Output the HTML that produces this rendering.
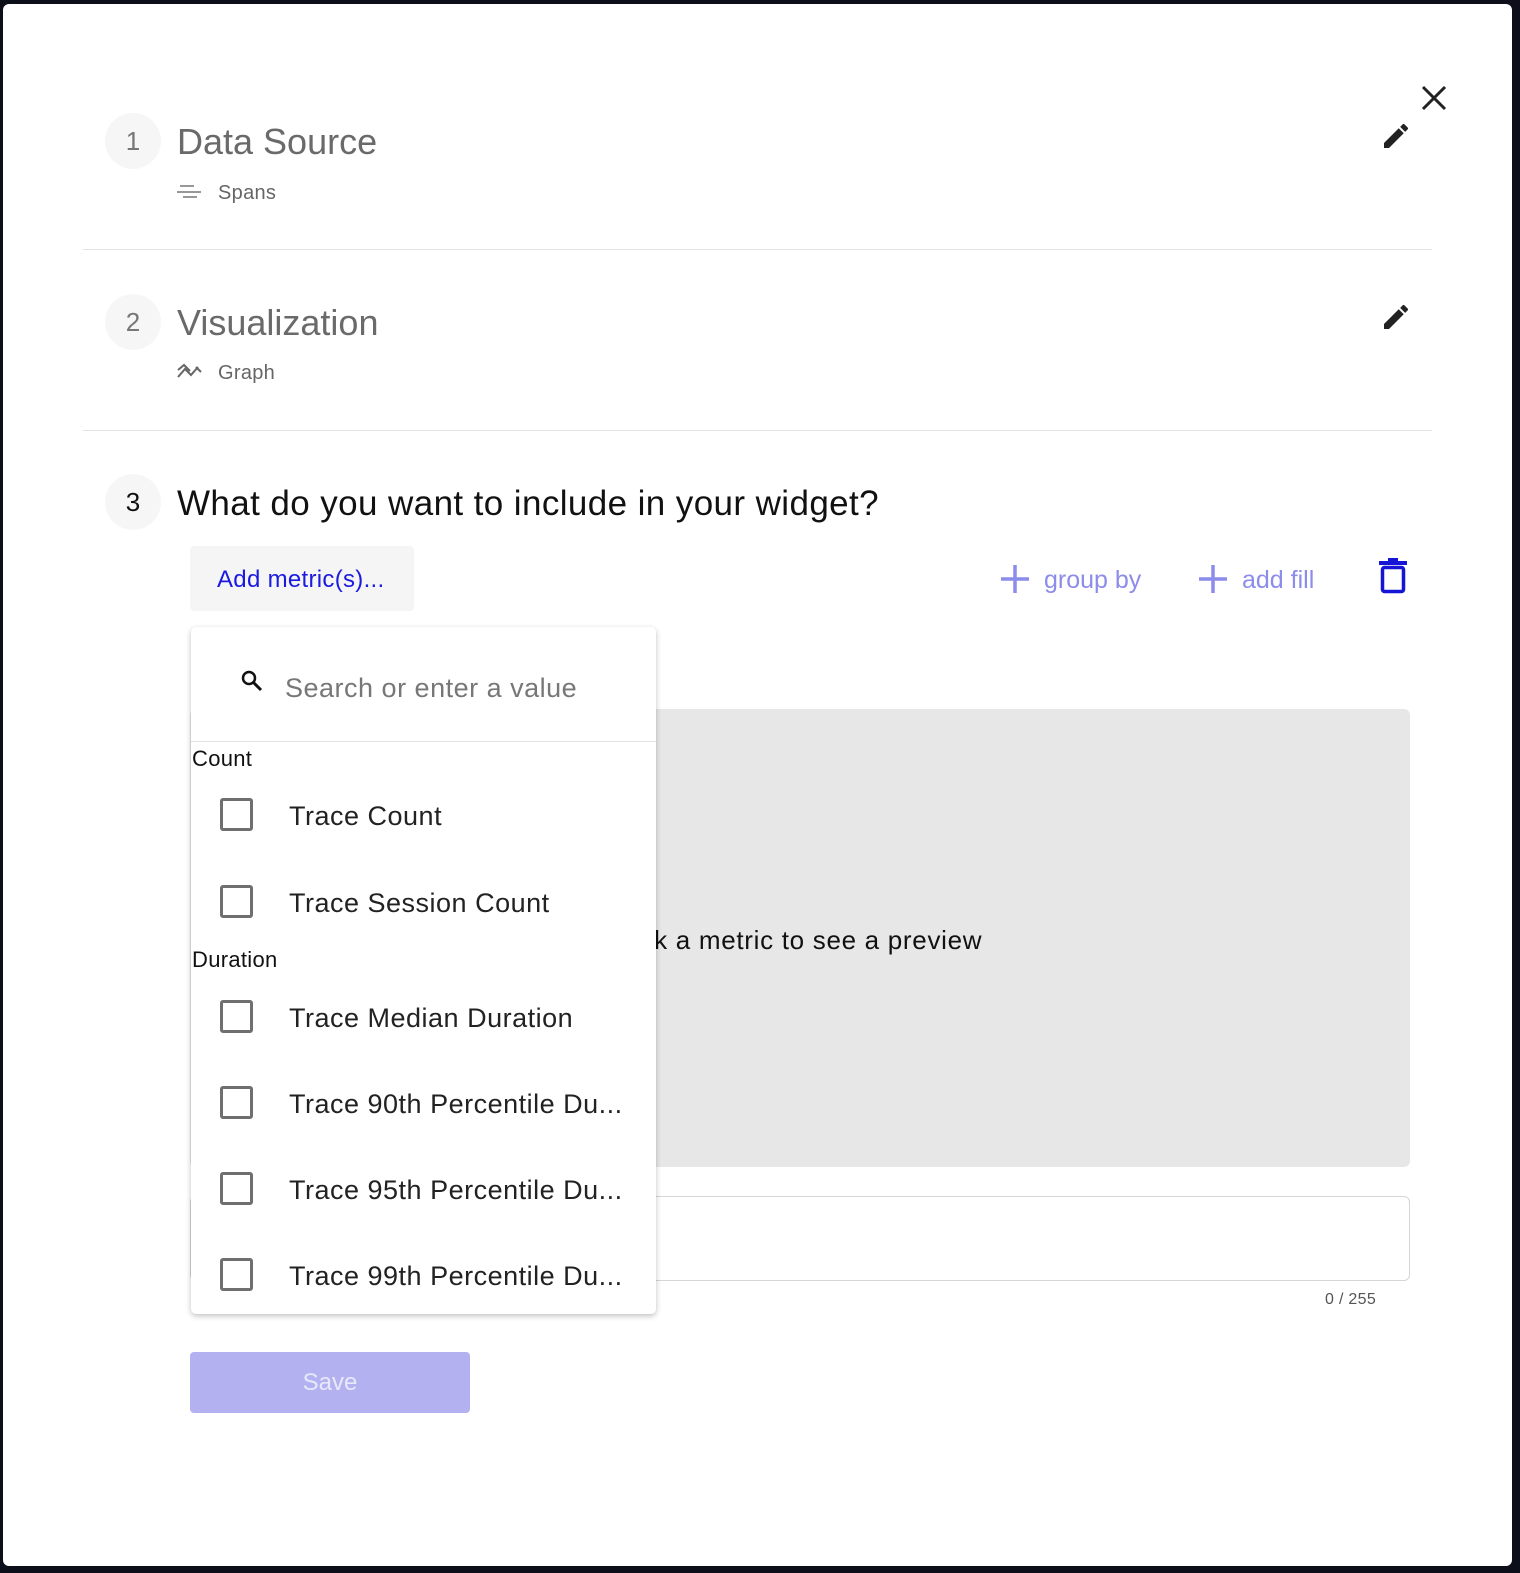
<!DOCTYPE html>
<html><head><meta charset="utf-8"><style>
html,body{margin:0;padding:0;width:1520px;height:1573px;overflow:hidden;background:#0c0e1a;font-family:"Liberation Sans",Roboto,sans-serif}
.modal{position:absolute;left:3px;top:4px;width:1509px;height:1562px;background:#fff;border-radius:6px}
.a{position:absolute;white-space:nowrap;line-height:1}
.circ{position:absolute;width:56px;height:56px;border-radius:50%;background:#f6f6f6;text-align:center;line-height:56px;font-size:26px;color:#777}
.hr{position:absolute;left:83px;width:1349px;height:1px;background:#e3e3e3}
.cb{position:absolute;left:220px;width:27px;height:27px;border:3px solid #6f6f6f;border-radius:3px}
.it{position:absolute;left:289px;font-size:27px;color:#222;line-height:1;white-space:nowrap;letter-spacing:0.5px}
</style></head><body>
<div class="modal"></div>

<svg style="position:absolute;left:1420px;top:84px" width="28" height="28" viewBox="0 0 28 28"><path d="M3 3L25 25M25 3L3 25" stroke="#222" stroke-width="3"/></svg>

<div class="circ" style="left:105px;top:113px">1</div>
<div class="a" style="left:177px;top:124px;font-size:36px;color:#6a6a6a">Data Source</div>
<svg style="position:absolute;left:177px;top:183px" width="24" height="16" viewBox="0 0 24 16"><path d="M3 3h14M0 9h24M6 14h14" stroke="#777" stroke-width="1.5"/></svg>
<div class="a" style="left:218px;top:183px;font-size:20px;color:#666;letter-spacing:0.3px">Spans</div>
<svg style="position:absolute;left:1380px;top:120px" width="32" height="32" viewBox="0 0 24 24"><path fill="#222" d="M3 17.25V21h3.75L17.81 9.94l-3.75-3.75L3 17.25zM20.71 7.04a1 1 0 000-1.41l-2.34-2.34a1 1 0 00-1.41 0l-1.83 1.83 3.75 3.75 1.83-1.83z"/></svg>
<div class="hr" style="top:249px"></div>

<div class="circ" style="left:105px;top:294px">2</div>
<div class="a" style="left:177px;top:305px;font-size:36px;color:#6a6a6a">Visualization</div>
<svg style="position:absolute;left:177px;top:363px" width="26" height="18" viewBox="0 0 26 18"><path d="M1 14L8 6l6 6 7-8M1 7l6-5 6 6M19 4l5 5" stroke="#666" stroke-width="2" fill="none"/></svg>
<div class="a" style="left:218px;top:363px;font-size:20px;color:#666;letter-spacing:0.3px">Graph</div>
<svg style="position:absolute;left:1380px;top:301px" width="32" height="32" viewBox="0 0 24 24"><path fill="#222" d="M3 17.25V21h3.75L17.81 9.94l-3.75-3.75L3 17.25zM20.71 7.04a1 1 0 000-1.41l-2.34-2.34a1 1 0 00-1.41 0l-1.83 1.83 3.75 3.75 1.83-1.83z"/></svg>
<div class="hr" style="top:430px"></div>

<div class="circ" style="left:105px;top:474px;color:#111">3</div>
<div class="a" style="left:177px;top:486px;font-size:35px;color:#111;letter-spacing:0.4px">What do you want to include in your widget?</div>

<div style="position:absolute;left:190px;top:546px;width:224px;height:65px;background:#f5f5f5;border-radius:4px"></div>
<div class="a" style="left:217px;top:568px;font-size:24px;color:#1a1ae0;letter-spacing:0.3px">Add metric(s)...</div>

<svg style="position:absolute;left:999px;top:563px" width="32" height="32" viewBox="0 0 32 32"><path d="M16 2v28M2 16h28" stroke="#8c8ceb" stroke-width="3.5"/></svg>
<div class="a" style="left:1044px;top:568px;font-size:25px;color:#8c8ceb">group by</div>
<svg style="position:absolute;left:1197px;top:563px" width="32" height="32" viewBox="0 0 32 32"><path d="M16 2v28M2 16h28" stroke="#8c8ceb" stroke-width="3.5"/></svg>
<div class="a" style="left:1242px;top:568px;font-size:25px;color:#8c8ceb">add fill</div>
<svg style="position:absolute;left:1378px;top:558px" width="30" height="36" viewBox="0 0 30 36"><rect x="1" y="3" width="28" height="4" fill="#1515d6"/><rect x="10" y="0" width="10" height="4" fill="#1515d6"/><rect x="4.5" y="9.5" width="21" height="24" rx="2" fill="none" stroke="#1515d6" stroke-width="3.5"/></svg>

<div style="position:absolute;left:190px;top:709px;width:1220px;height:458px;background:#e7e7e7;border-radius:6px"></div>
<div class="a" style="left:608px;top:927px;font-size:26px;color:#111;letter-spacing:0.7px">Click a metric to see a preview</div>

<div style="position:absolute;left:190px;top:1196px;width:1218px;height:83px;border:1px solid #d6d6d6;border-radius:6px"></div>
<div class="a" style="left:1325px;top:1292px;font-size:16px;color:#555;letter-spacing:0.3px">0 / 255</div>

<div style="position:absolute;left:190px;top:1352px;width:280px;height:61px;background:#b3b1f0;border-radius:4px;color:#e8e8fb;font-size:24px;text-align:center;line-height:62px">Save</div>

<div style="position:absolute;left:191px;top:627px;width:465px;height:687px;background:#fff;border-radius:5px;box-shadow:0 2px 6px rgba(0,0,0,.25)"></div>
<svg style="position:absolute;left:240px;top:669px" width="24" height="24" viewBox="0 0 24 24"><circle cx="9" cy="9" r="6" fill="none" stroke="#111" stroke-width="2.5"/><path d="M13 13l8 8" stroke="#111" stroke-width="3"/></svg>
<div class="a" style="left:285px;top:675px;font-size:27px;color:#777;letter-spacing:0.5px">Search or enter a value</div>
<div style="position:absolute;left:191px;top:741px;width:465px;height:1px;background:#e2e2e2"></div>
<div class="a" style="left:192px;top:748px;font-size:22px;color:#111;letter-spacing:0.3px">Count</div>
<div class="cb" style="top:798px"></div><div class="it" style="top:803px">Trace Count</div>
<div class="cb" style="top:885px"></div><div class="it" style="top:890px">Trace Session Count</div>
<div class="a" style="left:192px;top:949px;font-size:22px;color:#111;letter-spacing:0.3px">Duration</div>
<div class="cb" style="top:1000px"></div><div class="it" style="top:1005px">Trace Median Duration</div>
<div class="cb" style="top:1086px"></div><div class="it" style="top:1091px">Trace 90th Percentile Du...</div>
<div class="cb" style="top:1172px"></div><div class="it" style="top:1177px">Trace 95th Percentile Du...</div>
<div class="cb" style="top:1258px"></div><div class="it" style="top:1263px">Trace 99th Percentile Du...</div>
</body></html>
